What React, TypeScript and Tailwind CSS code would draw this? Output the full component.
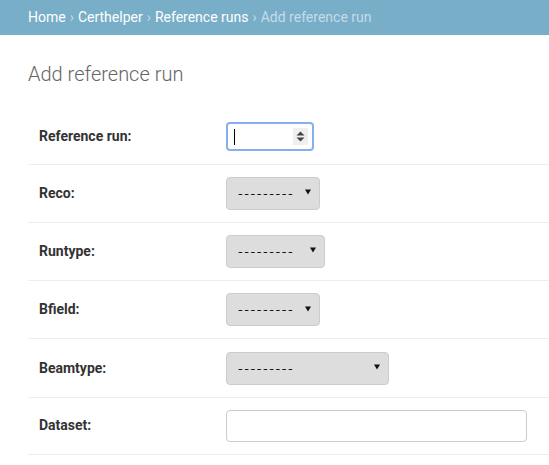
import React from "react";

const selects = [
  { label: "Reco:", width: "w-[94px]" },
  { label: "Runtype:", width: "w-[99px]" },
  { label: "Bfield:", width: "w-[94px]" },
  { label: "Beamtype:", width: "w-[163px]" },
];

function Select({ width }: { width: string }) {
  return (
    <div
      className={`${width} h-[33px] bg-[#dddddd] border border-[#cccccc] rounded-[4px] flex items-center justify-between pl-[11px] pr-[8px]`}
    >
      <span className="font-['DejaVu_Sans',sans-serif] text-[13px] tracking-[1.55px] text-[#111] mt-[1px]">
        ---------
      </span>
      <svg width="6" height="6" viewBox="0 0 6 6" className="mb-[2px]">
        <path d="M0 0.5 H6 L3 5.5 Z" fill="#111" />
      </svg>
    </div>
  );
}

export default function App() {
  return (
    <div className="min-h-screen bg-white font-['Roboto',sans-serif]">
      {/* BREADCRUMBS */}
      <div className="h-[35px] bg-[#79aec8] px-[28px] flex items-center text-[14px] text-white">
        <span>Home</span>
        <span className="mx-[4px] text-[#c4dce8]">›</span>
        <span>Certhelper</span>
        <span className="mx-[4px] text-[#c4dce8]">›</span>
        <span>Reference runs</span>
        <span className="mx-[4px] text-[#c4dce8]">›</span>
        <span className="text-[#c4dce8]">Add reference run</span>
      </div>

      <div className="pl-[28px]">
        <h1 className="pt-[25px] mb-[22px] text-[20px] leading-[28px] font-light text-[#666]">
          Add reference run
        </h1>

        <div className="flex flex-col">
          <div className="h-[54.5px] flex items-center border-b border-[#eeeeee]">
            <label className="w-[198px] pl-[11px] text-[14px] font-bold text-[#333]">
              Reference run:
            </label>
            <div className="w-[88px] h-[29px] rounded-[4px] border-2 border-[#86aef0] flex items-center justify-between pl-[6px] pr-[4px]">
              <div className="w-px h-[16px] bg-black" />
              <div className="w-[15px] h-[17px] bg-[#efefef] flex items-center justify-center">
                <svg width="9" height="11" viewBox="0 0 9 11">
                  <path d="M0.5 4.5 L4.5 0.5 L8.5 4.5 Z" fill="#444" />
                  <path d="M0.5 6.5 L4.5 10.5 L8.5 6.5 Z" fill="#444" />
                </svg>
              </div>
            </div>
          </div>

          {selects.map((s) => (
            <div
              key={s.label}
              className="h-[58.3px] flex items-center border-b border-[#eeeeee]"
            >
              <label className="w-[198px] pl-[11px] text-[14px] font-bold text-[#333]">
                {s.label}
              </label>
              <Select width={s.width} />
            </div>
          ))}

          <div className="h-[57.5px] flex items-center border-b border-[#eeeeee]">
            <label className="w-[198px] pl-[11px] text-[14px] font-bold text-[#333]">
              Dataset:
            </label>
            <div className="w-[301px] h-[32px] rounded-[4px] border border-[#cccccc] bg-white" />
          </div>
        </div>
      </div>
    </div>
  );
}
